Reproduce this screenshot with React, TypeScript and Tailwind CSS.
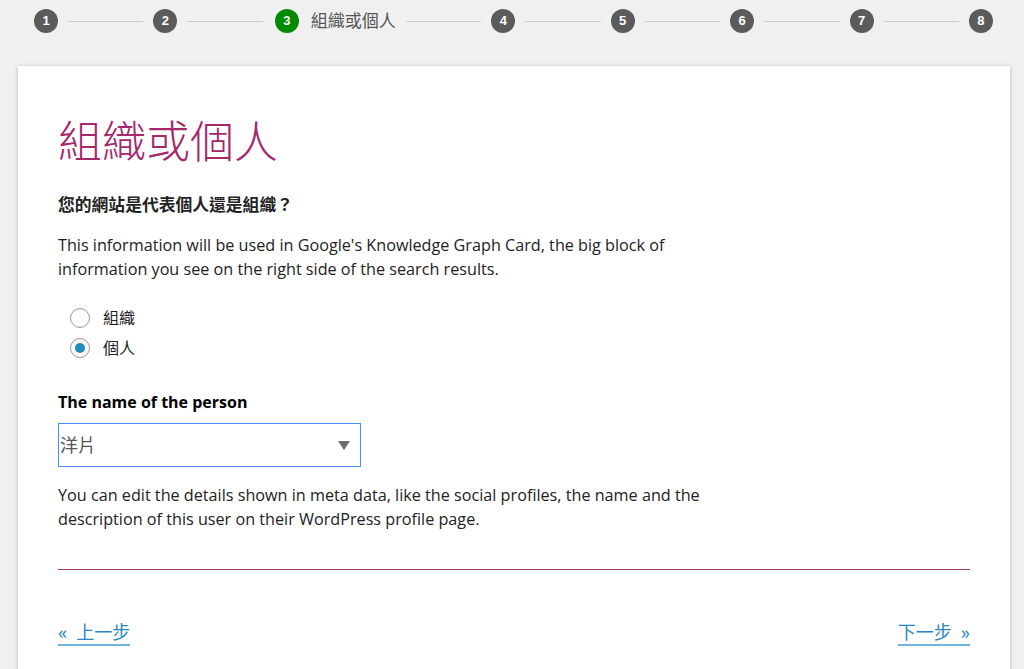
import { Fragment } from 'react';

const steps = [1, 2, 3, 4, 5, 6, 7, 8];
const active = 3;

function Stepper() {
  return (
    <div className="h-[42px] flex items-center pl-[34px] pr-[31px]">
      {steps.map((n, i) => (
        <Fragment key={n}>
          {i > 0 && <div className={`flex-1 h-px bg-[#cccccc] ml-[10px] ${n === active ? 'mr-[12px]' : 'mr-[10px]'}`} />}
          <div className="flex items-center">
            <span className={`w-[24px] h-[24px] rounded-full flex items-center justify-center text-white text-[13px] font-bold font-['Liberation_Sans',sans-serif] ${n === active ? 'bg-[#008a00]' : 'bg-[#5b5b5b]'}`}>
              {n}
            </span>
            {n === active && <span className="ml-[12px] text-[17px] text-[#555]">組織或個人</span>}
          </div>
        </Fragment>
      ))}
    </div>
  );
}

function Radio({ label, checked }: { label: string; checked?: boolean }) {
  return (
    <label className="h-[30px] flex items-center pl-[12px]">
      <span className="w-[20px] h-[20px] rounded-full border border-[#9a9a9a] bg-white flex items-center justify-center shadow-[inset_0_1px_2px_rgba(0,0,0,0.08)]">
        {checked && <span className="w-[10px] h-[10px] rounded-full bg-[#1e8cbe]" />}
      </span>
      <span className="ml-[13px] text-[16px] text-[#222]">{label}</span>
    </label>
  );
}

export default function App() {
  return (
    <div className="min-h-screen bg-[#f0f0f0] overflow-hidden font-['Open_Sans','Noto_Sans_CJK_TC',sans-serif] text-[#222]">
      <Stepper />
      <div className="mt-[24px] ml-[18px] mr-[14px] bg-white shadow-[0_1px_4px_rgba(0,0,0,0.25)] px-[40px] pt-[53px] pb-[40px]">
        <h1 className="text-[44px] leading-[44px] font-light text-[#a4286a]">組織或個人</h1>

        <p className="mt-[32px] text-[16.8px] leading-[20px] font-bold">您的網站是代表個人還是組織？</p>

        <p className="mt-[18px] text-[16.2px] leading-[24px]">
          This information will be used in Google's Knowledge Graph Card, the big block of<br />
          information you see on the right side of the search results.
        </p>

        <div className="mt-[22px] flex flex-col">
          <Radio label="組織" />
          <Radio label="個人" checked />
        </div>

        <p className="mt-[27px] text-[16px] leading-[24px] font-bold text-black">The name of the person</p>

        <div className="mt-[9px] w-[303px] h-[44px] border border-[#4a8ff7] flex items-center justify-between pl-px pr-[10px]">
          <span className="text-[18px] text-[#555]">洋片</span>
          <svg width="12" height="9" viewBox="0 0 12 9"><polygon points="0,0 12,0 6,9" fill="#6b6b6b" /></svg>
        </div>

        <p className="mt-[16px] text-[16.2px] leading-[24px]">
          You can edit the details shown in meta data, like the social profiles, the name and the<br />
          description of this user on their WordPress profile page.
        </p>

        <div className="mt-[38px] h-px bg-[#a83a74]" />

        <div className="mt-[50px] flex justify-between items-start">
          <a className="text-[18px] leading-[24px] text-[#2a86c0] border-b-2 border-[#6fb3de] cursor-pointer">«&nbsp; 上一步</a>
          <a className="text-[18px] leading-[24px] text-[#2a86c0] border-b-2 border-[#6fb3de] cursor-pointer">下一步&nbsp; »</a>
        </div>
      </div>
    </div>
  );
}
